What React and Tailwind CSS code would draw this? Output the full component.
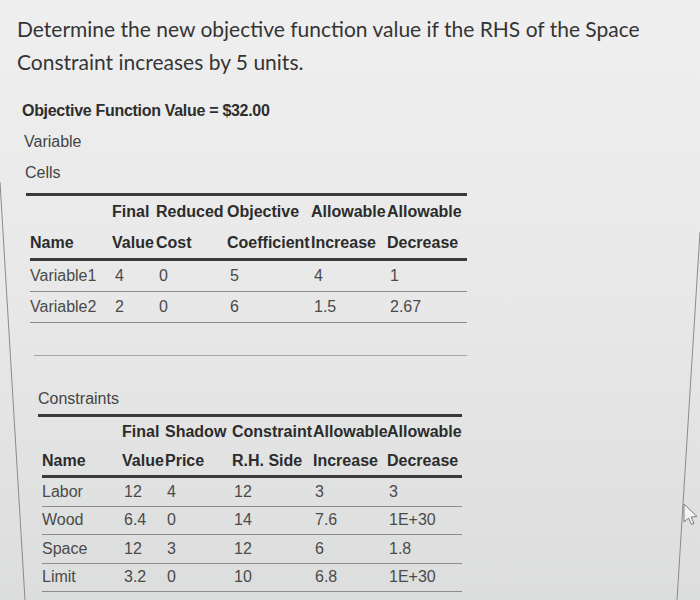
import React from 'react';

const VAR_COLS = 'grid grid-cols-[82px_44px_71px_84px_76px_78px]';
const CON_COLS = 'grid grid-cols-[80px_43px_67px_81px_74px_76px]';

const variables = [
  ['Variable1', '4', '0', '5', '4', '1'],
  ['Variable2', '2', '0', '6', '1.5', '2.67'],
];

const constraints = [
  ['Labor', '12', '4', '12', '3', '3'],
  ['Wood', '6.4', '0', '14', '7.6', '1E+30'],
  ['Space', '12', '3', '12', '6', '1.8'],
  ['Limit', '3.2', '0', '10', '6.8', '1E+30'],
];

function HeaderCell({ top, bottom }) {
  return (
    <div className="flex flex-col justify-end whitespace-nowrap">
      {top && <span>{top}</span>}
      <span>{bottom}</span>
    </div>
  );
}

export default function App() {
  return (
    <div className="relative w-[700px] h-[600px] overflow-hidden bg-gradient-to-b from-[#efefef] via-[#e7e8e7] to-[#dcdedd] text-[#3c3c3c] font-['Liberation_Sans',Arial,sans-serif]">
      {/* Question */}
      <p className="pl-[17px] pt-[12px] w-[660px] font-['Lato','Open_Sans',sans-serif] text-[21px] leading-[33px] text-[#353535]">
        Determine the new objective function value if the RHS of the Space Constraint increases by 5 units.
      </p>

      <div className="pl-[22px] mt-[17px] text-[16px] leading-[31px]">
        <p className="font-bold text-[#2e2e2e] tracking-[-0.3px]">Objective Function Value = $32.00</p>
        <p className="pl-[2px] text-[#444]">Variable</p>
        <p className="pl-[3px] text-[#444]">Cells</p>
      </div>

      {/* Variable cells table */}
      <div className="ml-[26px] mt-[5px] w-[441px] text-[16px]">
        <div className="h-[3px] bg-[#3a3a3a]" />
        <div className={`${VAR_COLS} pl-[4px] font-bold text-[#2c2c2c] leading-[31px]`}>
          <HeaderCell bottom="Name" />
          <HeaderCell top="Final" bottom="Value" />
          <HeaderCell top="Reduced" bottom="Cost" />
          <HeaderCell top="Objective" bottom="Coefficient" />
          <HeaderCell top="Allowable" bottom="Increase" />
          <HeaderCell top="Allowable" bottom="Decrease" />
        </div>
        <div className="ml-[4px] h-[3px] bg-[#3a3a3a]" />
        {variables.map((row) => (
          <div key={row[0]} className={`${VAR_COLS} ml-[4px] h-[31px] items-center border-b border-[#8c8c8c] text-[#4a4a4a]`}>
            {row.map((v, i) => (
              <span key={i} className={i === 0 ? '' : 'pl-[3px]'}>{v}</span>
            ))}
          </div>
        ))}
        <div className="ml-[8px] h-[33px] border-b border-[#a3a3a3]" />
      </div>

      {/* Constraints */}
      <p className="ml-[38px] mt-[28px] text-[16px] leading-[30px] text-[#444]">Constraints</p>
      <div className="ml-[38px] w-[424px] text-[16px]">
        <div className="h-[3px] bg-[#3a3a3a]" />
        <div className={`${CON_COLS} pl-[4px] font-bold text-[#2c2c2c] leading-[29px]`}>
          <HeaderCell bottom="Name" />
          <HeaderCell top="Final" bottom="Value" />
          <HeaderCell top="Shadow" bottom="Price" />
          <HeaderCell top="Constraint" bottom="R.H. Side" />
          <HeaderCell top="Allowable" bottom="Increase" />
          <HeaderCell top="Allowable" bottom="Decrease" />
        </div>
        <div className="ml-[4px] h-[3px] bg-[#3a3a3a]" />
        {constraints.map((row) => (
          <div key={row[0]} className={`${CON_COLS} ml-[4px] h-[28.5px] items-center border-b border-[#8c8c8c] text-[#4a4a4a]`}>
            {row.map((v, i) => (
              <span key={i} className={i === 0 ? '' : 'pl-[2px]'}>{v}</span>
            ))}
          </div>
        ))}
      </div>

      {/* screen edges and mouse pointer */}
      <svg className="absolute inset-0 pointer-events-none" width="700" height="600" viewBox="0 0 700 600">
        <line x1="0" y1="182" x2="25" y2="600" stroke="#8a8a8a" strokeWidth="1" />
        <line x1="700" y1="232" x2="677" y2="600" stroke="#8a8a8a" strokeWidth="1" />
        <path d="M684 504 L684 522 L688.5 518 L691.5 524.5 L694 523.3 L691 517 L697 516.5 Z" fill="#f4f4f4" stroke="#7c7c7c" strokeWidth="1" strokeLinejoin="round" />
      </svg>
    </div>
  );
}
